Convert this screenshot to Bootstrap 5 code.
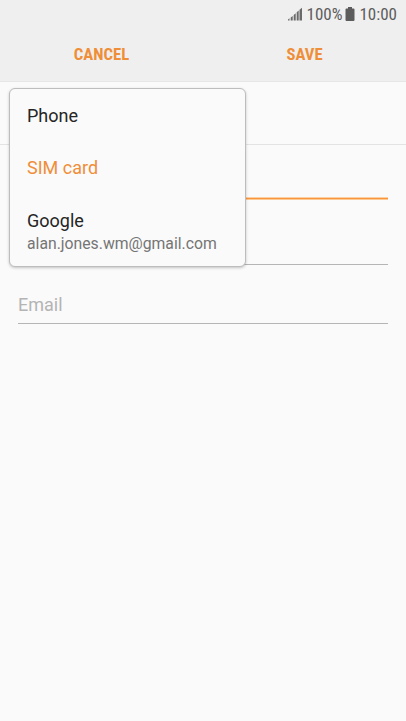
<!DOCTYPE html>
<html lang="en">
<head>
<meta charset="utf-8">
<meta name="viewport" content="width=device-width, initial-scale=1">
<title>New contact</title>
<link href="https://cdn.jsdelivr.net/npm/bootstrap@5.3.0/dist/css/bootstrap.min.css" rel="stylesheet">
<style>
body{font-family:Roboto,"Noto Sans",sans-serif;background:#fafafa;height:721px;overflow:hidden;color:#252525}
.top-area{background:#efefef;height:82px;border-bottom:1px solid #e6e6e6}
.status{height:28px;padding-right:9px;color:#5c5c5c;font-size:17px;line-height:28px;font-stretch:75%}
.status svg{display:block}
.signal{margin-right:5px}
.battery{margin:0 4px 0 3px}
.actions .btn{--bs-btn-padding-y:0;--bs-btn-padding-x:0;color:#ef8e38;font-size:16.7px;font-weight:700;font-stretch:75%;line-height:53px;border:0;border-radius:0}
.storage-row{height:63px;border-bottom:1px solid #e3e3e3}
.fields{padding:1px 18px 0}
.field{border-radius:0;border:0;border-bottom:1px solid #b5b5b5;background:transparent;padding:0;font-size:18px;color:#252525}
.field::placeholder{color:#b4b4b4;opacity:1}
.field:focus{background:transparent;box-shadow:none}
.name-field,.name-field:focus{height:54px;border-bottom:1px solid #fcc894;box-shadow:inset 0 -1px #f9963c,inset 0 -2px #fcd0a3}
.phone-field{height:65px}
.email-field{height:59px;padding-top:21px}
.picker{display:block;top:88px;left:9px;width:237px;height:179px;background:#fafafa;border:1px solid #bdbdbd;border-radius:6px;padding:1px 0 0;box-shadow:0 1px 3px rgba(0,0,0,.22)}
.picker .dropdown-item{padding:15.2px 17px 15px;font-size:18px;line-height:22px;color:#252525;background:transparent}
.picker .dropdown-item.chosen{color:#ef8e38}
.account{font-size:15.75px;line-height:23px;color:#757575}
</style>
<script src="https://cdn.jsdelivr.net/npm/bootstrap@5.3.0/dist/js/bootstrap.bundle.min.js"></script>
</head>
<body class="position-relative">
<header class="top-area">
  <div class="status d-flex align-items-center justify-content-end">
    <svg class="signal" width="14" height="14" viewBox="0 0 14 14" fill="#6a6a6a"><path d="M0 13.500v-1l1.500-1.200v2.200zM2.700 13.500V10.500l2-1.600v4.600zM5.700 13.500V8l2-1.700v7.200zM8.700 13.500V5.300l2-1.800v10zM11.500 13.500V2.800L14 .8v12.700z"/></svg>
    <span>100%</span>
    <svg class="battery" width="10" height="14" viewBox="0 0 10 14" fill="#5c5c5c"><path d="M3 0h4v1.500h1.500Q9.500 1.500 9.500 2.500V13q0 1-1 1h-7q-1 0-1-1V2.500q0-1 1-1H3z"/></svg>
    <span>10:00</span>
  </div>
  <div class="actions row g-0">
    <button class="btn col-6">CANCEL</button>
    <button class="btn col-6">SAVE</button>
  </div>
</header>
<main>
  <div class="storage-row"></div>
  <form class="fields">
    <input class="form-control field name-field" type="text" aria-label="Name">
    <input class="form-control field phone-field" type="tel" aria-label="Phone">
    <input class="form-control field email-field" type="email" placeholder="Email">
  </form>
</main>
<div class="picker dropdown-menu position-absolute">
  <a class="dropdown-item">Phone</a>
  <a class="dropdown-item chosen">SIM card</a>
  <a class="dropdown-item">Google<div class="account">alan.jones.wm@gmail.com</div></a>
</div>
</body>
</html>
